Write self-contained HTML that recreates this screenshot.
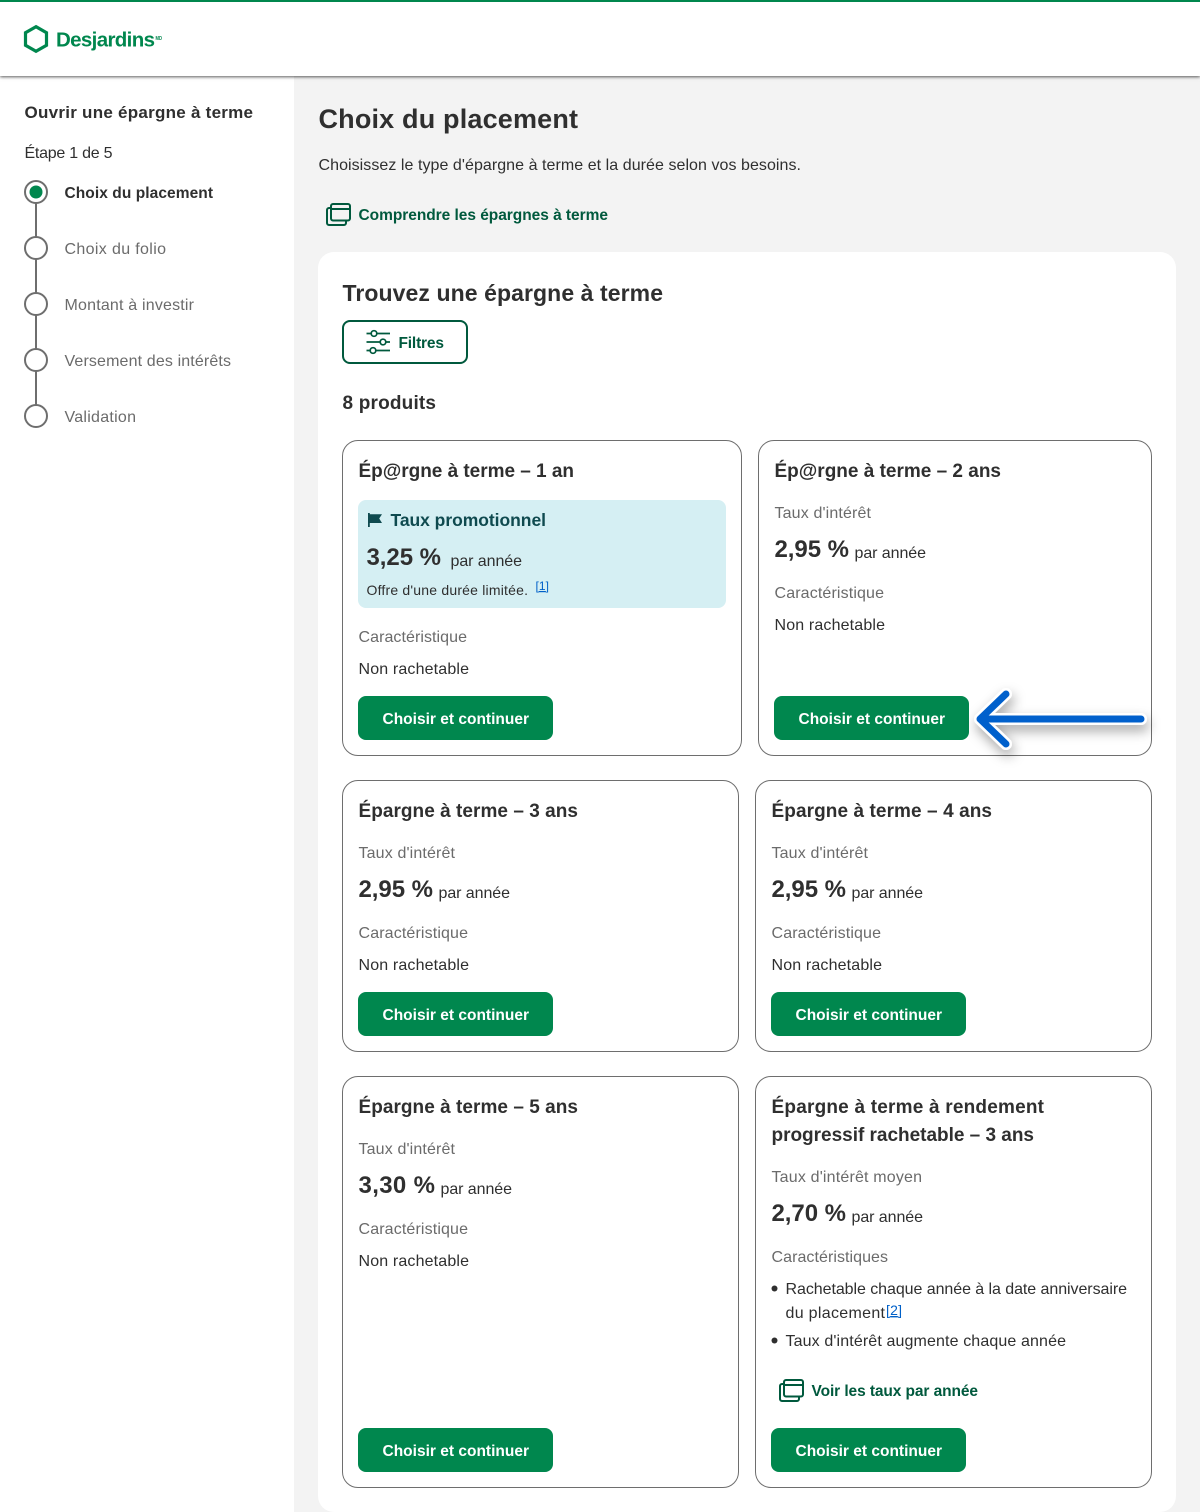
<!DOCTYPE html>
<html lang="fr"><head><meta charset="utf-8"><title>Choix du placement</title>
<style>
html,body{margin:0;padding:0;width:1200px;height:1512px;overflow:hidden;background:#f3f3f3}
.b{position:absolute;box-sizing:border-box}
.hdr{left:0;top:0;width:1200px;height:76px;background:#fff;border-top:2px solid #00874e;box-shadow:0 1px 3px rgba(0,0,0,.65);z-index:2}
.side{left:0;top:76px;width:294px;height:1436px;background:#fff}
.panel{left:318px;top:252px;width:858px;height:1260px;background:#fff;border-radius:16px}
.card{border:1px solid #6e6e6e;border-radius:16px;background:#fff}
.btn{background:#00874e;border-radius:8px;width:195px;height:44px}
.filt{left:342px;top:320px;width:126px;height:44px;border:2px solid #00593d;border-radius:8px}
.promo{left:358px;top:500px;width:368px;height:108px;background:#d5eff3;border-radius:8px}
svg.o{position:absolute;left:0;top:0;z-index:3}
text{font-family:"Liberation Sans",sans-serif;font-size:16px;fill:#2f2f2f}
.h{font-weight:bold;font-size:19px}
.s{font-weight:bold;font-size:15.5px}
.g{fill:#6b6b6b}
.w{fill:#fff;font-weight:bold;font-size:15.5px}
.l{fill:#00593d;font-weight:bold;font-size:15.5px}
.n{fill:#0060c8;font-size:12px;text-decoration:underline}
.r{font-weight:bold;font-size:24px}
</style></head><body>
<div class="b hdr"></div>
<div class="b side"></div>
<div class="b panel"></div>
<div class="b filt"></div>
<div class="b card" style="left:342px;top:440px;width:400px;height:316px"></div>
<div class="b card" style="left:758px;top:440px;width:394px;height:316px"></div>
<div class="b card" style="left:342px;top:780px;width:397px;height:272px"></div>
<div class="b card" style="left:755px;top:780px;width:397px;height:272px"></div>
<div class="b card" style="left:342px;top:1076px;width:397px;height:412px"></div>
<div class="b card" style="left:755px;top:1076px;width:397px;height:412px"></div>
<div class="b promo"></div>
<div class="b btn" style="left:358px;top:696px"></div>
<div class="b btn" style="left:774px;top:696px"></div>
<div class="b btn" style="left:358px;top:992px"></div>
<div class="b btn" style="left:771px;top:992px"></div>
<div class="b btn" style="left:358px;top:1428px"></div>
<div class="b btn" style="left:771px;top:1428px"></div>
<svg class="o" width="1200" height="1512" viewBox="0 0 1200 1512" xmlns="http://www.w3.org/2000/svg">
<defs>
<filter id="sh" x="-20%" y="-60%" width="140%" height="260%"><feDropShadow dx="2" dy="6" stdDeviation="6" flood-color="#000" flood-opacity=".35"/></filter>
<g id="win" fill="none" stroke="#00593d" stroke-width="2" stroke-linejoin="round"><rect x="5" y="1" width="19" height="16.5" rx="2"/><path d="M5 6H24"/><path d="M5 5H3a2 2 0 0 0-2 2v13a2 2 0 0 0 2 2h15a2 2 0 0 0 2-2v-2.500"/></g>
</defs>
<!-- logo -->
<path d="M36 26.700 46.500 32.700V45.300L36 51.300 25.500 45.300V32.700Z" fill="none" stroke="#00874e" stroke-width="3.200" stroke-linejoin="miter"/>
<text x="56" y="46.500" textLength="99" lengthAdjust="spacing" style="font-size:20.5px;font-weight:bold;fill:#00874e">Desjardins</text>
<text x="155.500" y="40" textLength="6.500" lengthAdjust="spacingAndGlyphs" style="font-size:5px;font-weight:bold;fill:#00874e">MD</text>
<!-- sidebar -->
<text x="24.500" y="118" textLength="228.500" class="s" style="font-size:17px">Ouvrir une épargne à terme</text>
<text x="24.500" y="158" textLength="88">Étape 1 de 5</text>
<path d="M36 203V237M36 259V293M36 315V349M36 371V405" stroke="#6e6e6e" stroke-width="2"/>
<g fill="#fff" stroke="#6e6e6e" stroke-width="2"><circle cx="36" cy="192" r="11"/><circle cx="36" cy="248" r="11"/><circle cx="36" cy="304" r="11"/><circle cx="36" cy="360" r="11"/><circle cx="36" cy="416" r="11"/></g>
<circle cx="36" cy="192" r="6.500" fill="#00874e"/>
<text x="64.500" y="198" textLength="148.500" class="s">Choix du placement</text>
<text x="64.500" y="254" textLength="101.500" class="g">Choix du folio</text>
<text x="64.500" y="310" textLength="129.500" class="g">Montant à investir</text>
<text x="64.500" y="366" textLength="166.500" class="g">Versement des intérêts</text>
<text x="64.500" y="422" textLength="71.500" class="g">Validation</text>
<!-- heading -->
<text x="318.500" y="128" textLength="259.500" style="font-size:27px;font-weight:bold">Choix du placement</text>
<text x="318.500" y="170" textLength="482.500">Choisissez le type d'épargne à terme et la durée selon vos besoins.</text>
<use href="#win" x="326" y="203"/>
<text x="358.500" y="220" textLength="249.500" class="l">Comprendre les épargnes à terme</text>
<text x="342.500" y="301" textLength="320.500" style="font-size:23px;font-weight:bold">Trouvez une épargne à terme</text>
<g fill="none" stroke="#00593d" stroke-width="1.700"><path d="M366.500 333.500H390M366.500 342H390M366.500 350.500H390"/><g fill="#fff"><circle cx="374" cy="333.500" r="2.800"/><circle cx="383" cy="342" r="2.800"/><circle cx="373" cy="350.500" r="2.800"/></g></g>
<text x="398.500" y="348" textLength="45.500" class="l">Filtres</text>
<text x="342.500" y="409" textLength="93.500" class="h">8 produits</text>
<!-- card 1 -->
<text x="358.500" y="477" textLength="215.500" class="h">Ép@rgne à terme – 1 an</text>
<path d="M368 513h1.800v1.300h12.200l-2.800 4.200 2.800 4.500h-12.200v4h-1.800z" fill="#0f4a4f"/>
<text x="390.500" y="526" textLength="155.500" style="font-size:17.500px;font-weight:bold;fill:#0f4a4f">Taux promotionnel</text>
<text x="366.500" y="565" textLength="74.500" class="r">3,25 %</text>
<text x="450.500" y="566" textLength="71.500">par année</text>
<text x="366.500" y="595" textLength="161.500" style="font-size:14px">Offre d'une durée limitée.</text>
<text x="535.500" y="590" textLength="13.500" class="n">[1]</text>
<text x="358.500" y="642" textLength="108.500" class="g">Caractéristique</text>
<text x="358.500" y="674" textLength="110.500">Non rachetable</text>
<text x="382.500" y="724" textLength="146.500" class="w">Choisir et continuer</text>
<!-- card 2 -->
<text x="774.500" y="477" textLength="226.500" class="h">Ép@rgne à terme – 2 ans</text>
<text x="774.500" y="518" textLength="96.500" class="g">Taux d'intérêt</text>
<text x="774.500" y="557" textLength="74.500" class="r">2,95 %</text>
<text x="854.500" y="558" textLength="71.500">par année</text>
<text x="774.500" y="598" textLength="109.500" class="g">Caractéristique</text>
<text x="774.500" y="630" textLength="110.500">Non rachetable</text>
<text x="798.500" y="724" textLength="146.500" class="w">Choisir et continuer</text>
<!-- card 3 -->
<text x="358.500" y="817" textLength="219.500" class="h">Épargne à terme – 3 ans</text>
<text x="358.500" y="858" textLength="96.500" class="g">Taux d'intérêt</text>
<text x="358.500" y="897" textLength="74.500" class="r">2,95 %</text>
<text x="438.500" y="898" textLength="71.500">par année</text>
<text x="358.500" y="938" textLength="109.500" class="g">Caractéristique</text>
<text x="358.500" y="970" textLength="110.500">Non rachetable</text>
<text x="382.500" y="1020" textLength="146.500" class="w">Choisir et continuer</text>
<!-- card 4 -->
<text x="771.500" y="817" textLength="220.500" class="h">Épargne à terme – 4 ans</text>
<text x="771.500" y="858" textLength="96.500" class="g">Taux d'intérêt</text>
<text x="771.500" y="897" textLength="74.500" class="r">2,95 %</text>
<text x="851.500" y="898" textLength="71.500">par année</text>
<text x="771.500" y="938" textLength="109.500" class="g">Caractéristique</text>
<text x="771.500" y="970" textLength="110.500">Non rachetable</text>
<text x="795.500" y="1020" textLength="146.500" class="w">Choisir et continuer</text>
<!-- card 5 -->
<text x="358.500" y="1113" textLength="219.500" class="h">Épargne à terme – 5 ans</text>
<text x="358.500" y="1154" textLength="96.500" class="g">Taux d'intérêt</text>
<text x="358.500" y="1193" textLength="76.500" class="r">3,30 %</text>
<text x="440.500" y="1194" textLength="71.500">par année</text>
<text x="358.500" y="1234" textLength="109.500" class="g">Caractéristique</text>
<text x="358.500" y="1266" textLength="110.500">Non rachetable</text>
<text x="382.500" y="1456" textLength="146.500" class="w">Choisir et continuer</text>
<!-- card 6 -->
<text x="771.500" y="1113" textLength="272.500" class="h">Épargne à terme à rendement</text>
<text x="771.500" y="1141" textLength="262.500" class="h">progressif rachetable – 3 ans</text>
<text x="771.500" y="1182" textLength="150.500" class="g">Taux d'intérêt moyen</text>
<text x="771.500" y="1221" textLength="74.500" class="r">2,70 %</text>
<text x="851.500" y="1222" textLength="71.500">par année</text>
<text x="771.500" y="1262" textLength="116.500" class="g">Caractéristiques</text>
<circle cx="774.500" cy="1288.500" r="3" fill="#2f2f2f"/>
<text x="785.500" y="1294" textLength="341.500">Rachetable chaque année à la date anniversaire</text>
<text x="785.500" y="1318" textLength="99.500">du placement</text>
<text x="886" y="1315" textLength="16" class="n" style="font-size:14px">[2]</text>
<circle cx="774.500" cy="1340.500" r="3" fill="#2f2f2f"/>
<text x="785.500" y="1346" textLength="280.500">Taux d'intérêt augmente chaque année</text>
<use href="#win" x="779" y="1379"/>
<text x="811.500" y="1396" textLength="166.500" class="l">Voir les taux par année</text>
<text x="795.500" y="1456" textLength="146.500" class="w">Choisir et continuer</text>
<!-- arrow -->
<g fill="none" stroke-linecap="round" stroke-linejoin="round">
<path d="M1141 719H980M1006 694 980 719 1006 744" stroke="#fff" stroke-width="12" filter="url(#sh)"/>
<path d="M1141 719H980M1006 694 980 719 1006 744" stroke="#0060cc" stroke-width="7"/>
</g>
</svg>
</body></html>
